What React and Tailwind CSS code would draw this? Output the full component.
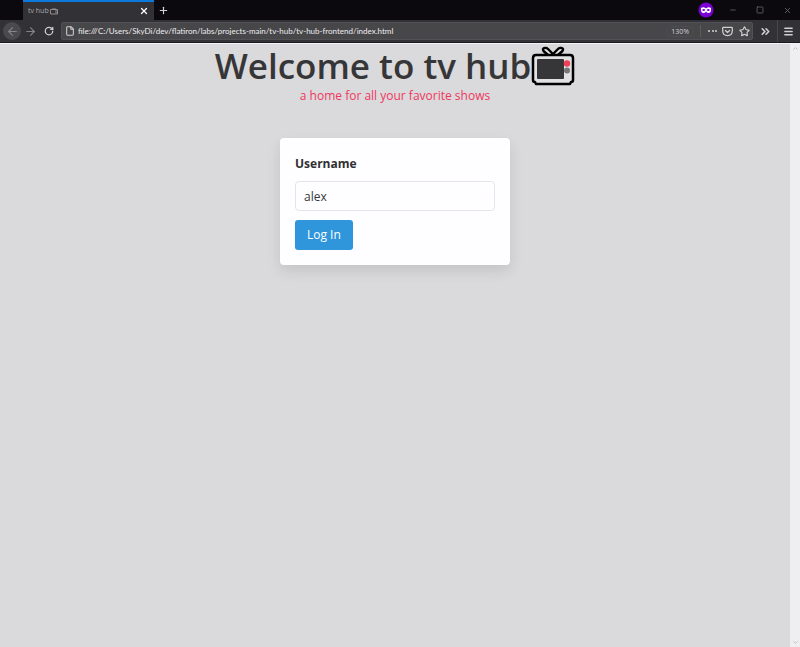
import { ArrowLeft, ArrowRight, RotateCw, File, Plus, X, Minus, Square, Star, ChevronsRight, Menu, ChevronUp, ChevronDown } from 'lucide-react';

function TvIcon() {
  return (
    <svg width="44" height="40" viewBox="0 0 44 40" fill="none" aria-label="tv" className="shrink-0">
      <path d="M17 9L12.500 5Q11 2.500 13.500 2Q15.500 1.500 17 3L22 8L27 3Q28.500 1.500 30.500 2Q33 2.500 31.500 5L27 9" fill="#e1e0e2" stroke="#000" strokeWidth="2.400" strokeLinecap="round" strokeLinejoin="round" />
      <path d="M5 9H39Q42 9 42 12V34Q42 36 40 36L39 38H5L4 36Q2 36 2 34V12Q2 9 5 9Z" fill="#e1e0e2" stroke="#000" strokeWidth="2.500" strokeLinejoin="round" />
      <rect x="6" y="13" width="27" height="20" rx="1" fill="#363638" />
      <circle cx="36" cy="17.500" r="3.200" fill="#ee4056" />
      <circle cx="36" cy="24.500" r="3" fill="#77777a" />
    </svg>
  );
}

function TabTvIcon() {
  return (
    <svg width="8" height="8" viewBox="0 0 8 8" fill="none" stroke="#a2a2a5" strokeWidth="0.800" aria-hidden="true">
      <path d="M0.500 2.500H7.500V7H0.500ZM2.500 1L4 2.500L5.500 1M6 3V6.500" />
    </svg>
  );
}

function PocketIcon() {
  return (
    <svg width="11" height="11" viewBox="0 0 16 16" fill="none" stroke="currentColor" strokeWidth="1.800" strokeLinecap="round" strokeLinejoin="round">
      <path d="M2 2H14Q15 2 15 3V7Q15 14 8 14Q1 14 1 7V3Q1 2 2 2ZM5 6.500L8 9.500L11 6.500" />
    </svg>
  );
}

function MaskBadge() {
  return (
    <svg width="16" height="16" viewBox="0 0 16 16" aria-label="Private browsing">
      <circle cx="8" cy="8" r="7.500" fill="#7b00d6" />
      <path d="M3 6Q5.500 4.500 8 6.500Q10.500 4.500 13 6Q13.500 11 10.500 11Q9 11 8 9.500Q7 11 5.500 11Q2.500 11 3 6Z" fill="#fff" />
      <ellipse cx="5.700" cy="8" rx="1.400" ry="0.900" fill="#7b00d6" />
      <ellipse cx="10.300" cy="8" rx="1.400" ry="0.900" fill="#7b00d6" />
    </svg>
  );
}

function TabStrip() {
  return (
    <div className="flex h-5 items-stretch bg-[#0b090d] pl-[23px]">
      <div className="flex w-[131px] items-center justify-between border-t-2 border-[#0a7bdc] bg-[#323135] pr-[5px] pl-[5px] text-[#a9a9ac]">
        <span className="flex items-center gap-px text-[7px]">tv hub <TabTvIcon /></span>
        <button aria-label="Close tab" className="text-white"><X size={10} strokeWidth={3} /></button>
      </div>
      <button aria-label="New tab" className="px-1 text-[#d2d2d4]"><Plus size={11} strokeWidth={2.5} /></button>
      <div className="ml-auto flex items-center gap-[15px] pr-2 text-[#77767a]">
        <MaskBadge />
        <div className="flex items-center gap-[19px]">
          <button aria-label="Minimize"><Minus size={8} /></button>
          <button aria-label="Maximize"><Square size={8} strokeWidth={2} /></button>
          <button aria-label="Close window"><X size={9} /></button>
        </div>
      </div>
    </div>
  );
}

function Toolbar() {
  return (
    <div className="flex h-[23px] items-center border-b border-[#1b1a1d] bg-[#323135] text-[#d0d0d2]">
      <button aria-label="Back" className="ml-[3px] flex size-[18px] items-center justify-center rounded-full bg-[#4a494d] text-[#858488]"><ArrowLeft size={13} /></button>
      <button aria-label="Forward" className="ml-[3px] text-[#858488]"><ArrowRight size={13} /></button>
      <button aria-label="Reload" className="ml-[7px]"><RotateCw size={10} strokeWidth={3} /></button>
      <div className="ml-[7px] flex h-[18px] min-w-0 flex-1 items-center rounded-xs border border-[#525156] bg-[#474649] pr-0.5 pl-[3px]">
        <File size={10} strokeWidth={2.5} className="shrink-0" />
        <input aria-label="Address" defaultValue="file:///C:/Users/SkyDi/dev/flatiron/labs/projects-main/tv-hub/tv-hub-frontend/index.html" className="ml-[3px] min-w-0 flex-1 bg-transparent font-['Lato',sans-serif] text-[8px] leading-3 text-[#ededee] outline-none" />
        <button className="rounded-full border border-[#4e4d51] px-1 text-[7px] leading-[9px]">130%</button>
        <div className="ml-1.5 h-3 w-px bg-[#5c5b60]" />
        <button aria-label="Page actions" className="ml-[7px] flex w-[9px] items-center justify-between">
          <span className="size-0.5 rounded-full bg-current" /><span className="size-0.5 rounded-full bg-current" /><span className="size-0.5 rounded-full bg-current" />
        </button>
        <button aria-label="Save to Pocket" className="ml-[5px]"><PocketIcon /></button>
        <button aria-label="Bookmark" className="ml-1.5"><Star size={11} strokeWidth={2.5} /></button>
      </div>
      <button aria-label="More tools" className="ml-1.5"><ChevronsRight size={13} strokeWidth={3} /></button>
      <div className="ml-[5px] h-full w-px bg-[#48474b]" />
      <button aria-label="Menu" className="mr-1.5 ml-[5px]"><Menu size={11} strokeWidth={3} /></button>
    </div>
  );
}

export default function App() {
  return (
    <div className="flex min-h-screen flex-col bg-[#dad9db] font-['Open_Sans','Noto_Sans',sans-serif]">
      <header><TabStrip /><Toolbar /></header>
      <div className="flex flex-1 border-t border-[#f4f4f5]">
        <main className="flex min-w-0 flex-1 flex-col items-center">
          <h1 className="flex items-center text-[35px] leading-[44px] font-semibold text-[#363638]">
            Welcome to tv hub <TvIcon />
          </h1>
          <p className="text-[12px] leading-4 text-[#f0375f]">a home for all your favorite shows</p>
          <form className="mt-[34px] w-[230px] rounded bg-[#fefdff] p-[15px] shadow-[0_6px_14px_rgba(10,10,10,0.1)]" onSubmit={(e) => e.preventDefault()}>
            <label htmlFor="username" className="block text-[12px] leading-[21px] font-bold text-[#303033]">Username</label>
            <input id="username" defaultValue="alex" className="mt-[7px] block h-[30px] w-full rounded border border-[#e5e4e8] bg-transparent px-2 text-[12px] text-[#363638] outline-none" />
            <button className="mt-[9px] block h-[30px] rounded-[3px] bg-[#3096dc] px-3 text-[12px] text-white">Log In</button>
          </form>
        </main>
        <div className="flex w-2.5 flex-col items-center justify-between bg-[#efeef1] py-px text-[#a0a0a3]" aria-hidden="true">
          <ChevronUp size={7} /><ChevronDown size={7} />
        </div>
      </div>
    </div>
  );
}
